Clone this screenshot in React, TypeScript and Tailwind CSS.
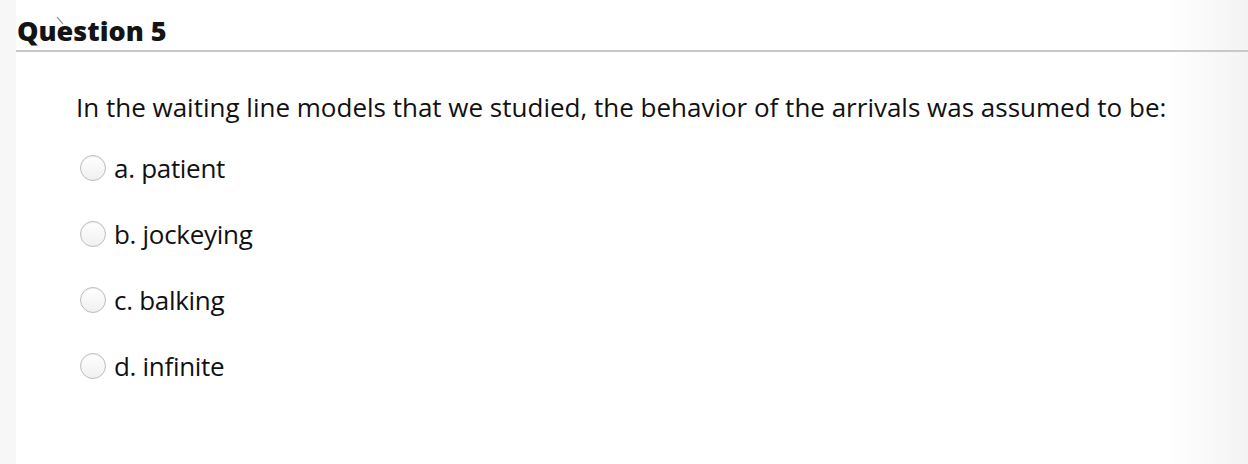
import React from "react";

const options = ["a. patient", "b. jockeying", "c. balking", "d. infinite"];

const Radio = () => (
  <span className="block h-[26px] w-[26px] shrink-0 rounded-full border border-[#bdbdbd] bg-gradient-to-b from-[#ffffff] to-[#f0f0f0] shadow-[inset_0_1px_1px_rgba(0,0,0,0.06)]" />
);

export default function App() {
  return (
    <div
      className="flex h-[464px] w-[1248px] bg-white text-[#111]"
      style={{ fontFamily: '"Open Sans", sans-serif' }}
    >
      {/* left gutter */}
      <div className="w-4 shrink-0 bg-[#f7f7f7]" />

      <div className="relative flex flex-1 flex-col">
        {/* right fade */}
        <div className="pointer-events-none absolute right-0 top-0 h-full w-[80px] bg-gradient-to-r from-[rgba(255,255,255,0)] to-[#f3f3f3]" />

        <div className="relative z-10 border-b-2 border-[#c8c8c8] pl-[1px] pt-[14px] pb-[2px]">
          <h2 className="text-[27px] font-extrabold leading-[34px] text-[#141414]">Question 5</h2>
          {/* faint cursor tick over the heading */}
          <svg className="absolute left-[40px] top-[16px]" width="8" height="10" viewBox="0 0 8 10">
            <path d="M1 1 L7 8" stroke="#9a9a9a" strokeWidth="1.2" fill="none" />
          </svg>
        </div>

        <div className="relative pl-[60px] pt-[38px]">
          <p className="text-[26px] leading-[34px]">
            In the waiting line models that we studied, the behavior of the arrivals was assumed to be:
          </p>

          <div className="mt-[28px] flex flex-col gap-[34px] pl-[4px]">
            {options.map((o) => (
              <label key={o} className="flex h-[32px] items-center gap-[8px]">
                <Radio />
                <span className="text-[26px] leading-[32px] tracking-[-0.3px]">{o}</span>
              </label>
            ))}
          </div>
        </div>
      </div>
    </div>
  );
}
